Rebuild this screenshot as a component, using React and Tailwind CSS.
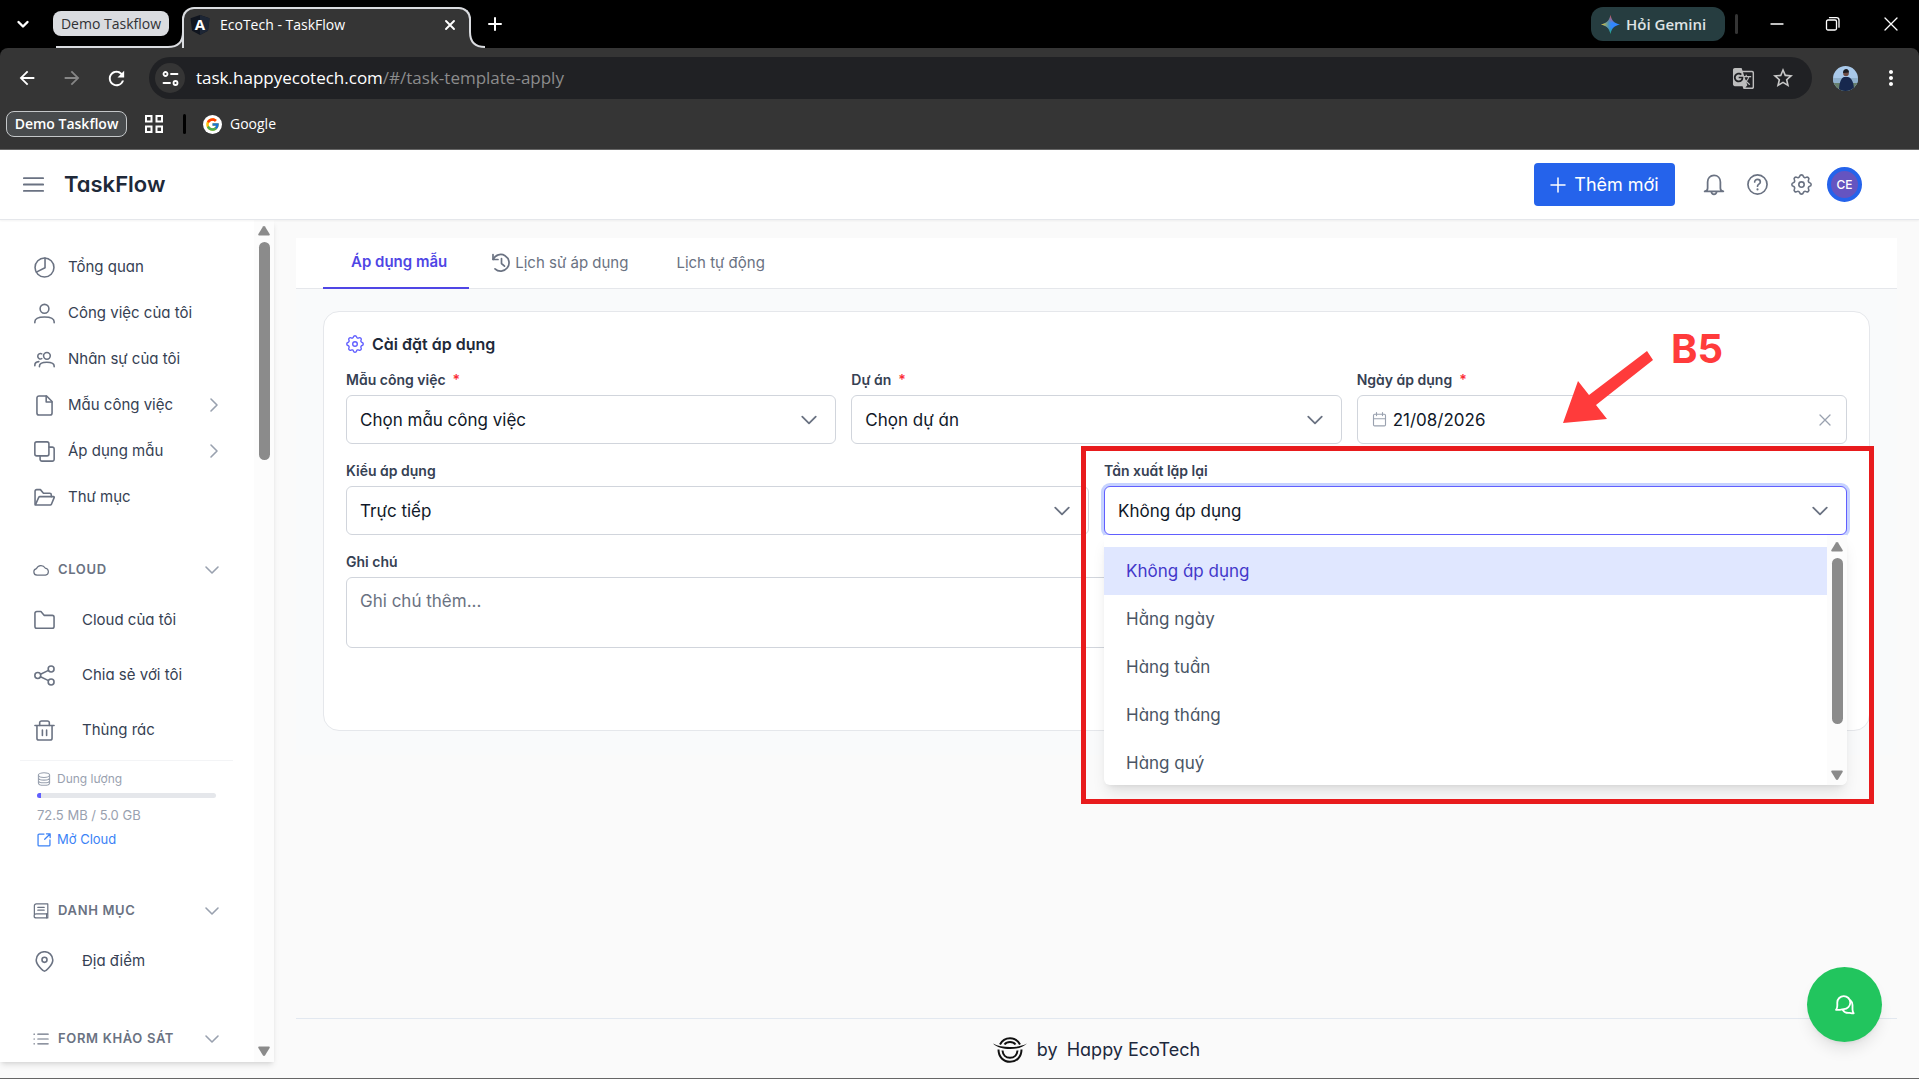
import { useState } from "react";
import { FcGoogle } from "react-icons/fc";
import { MdArrowBack, MdArrowForward, MdGTranslate, MdMoreVert, MdRefresh, MdStarBorder } from "react-icons/md";

const Icon = ({ className, children, box = 20, stroke = 1.5 }) => (
    <svg
        className={`shrink-0 ${className}`}
        viewBox={`0 0 ${box} ${box}`}
        fill="none"
        stroke="currentColor"
        strokeWidth={stroke}
        strokeLinecap="round"
        strokeLinejoin="round"
        aria-hidden="true"
    >
        {children}
    </svg>
);

const ChevronDown = ({ className }) => (
    <Icon className={className} box={16} stroke={1.6}>
        <path d="M2 5l6 6 6-6" />
    </Icon>
);

const ChevronRight = ({ className }) => (
    <Icon className={className} box={16} stroke={1.6}>
        <path d="M5 2l6 6-6 6" />
    </Icon>
);

const Cog = ({ className }) => (
    <svg
        className={`shrink-0 ${className}`}
        viewBox="2.2 2.2 19.6 19.6"
        fill="none"
        stroke="currentColor"
        strokeWidth="1.5"
        strokeLinejoin="round"
        aria-hidden="true"
    >
        <path d="M10.325 4.317c.426-1.756 2.924-1.756 3.35 0a1.724 1.724 0 002.573 1.066c1.543-.94 3.31.826 2.37 2.37a1.724 1.724 0 001.065 2.572c1.756.426 1.756 2.924 0 3.35a1.724 1.724 0 00-1.066 2.573c.94 1.543-.826 3.31-2.37 2.37a1.724 1.724 0 00-2.572 1.065c-.426 1.756-2.924 1.756-3.35 0a1.724 1.724 0 00-2.573-1.066c-1.543.94-3.31-.826-2.37-2.37a1.724 1.724 0 00-1.065-2.572c-1.756-.426-1.756-2.924 0-3.35a1.724 1.724 0 001.066-2.573c-.94-1.543.826-3.31 2.37-2.37.996.608 2.296.07 2.572-1.065z" />
        <circle cx="12" cy="12" r="2.5" />
    </svg>
);

const icons = {
    pie: (
        <>
            <circle cx="10" cy="10" r="9" />
            <path d="M10.500 1v9.300L2.200 14.400" />
        </>
    ),
    user: (
        <>
            <circle cx="10" cy="5.500" r="4.200" />
            <path d="M.8 18.800v-.9c0-3.200 3-4.600 9.200-4.600s9.200 1.400 9.200 4.600v.9" />
        </>
    ),
    users: (
        <>
            <circle cx="12.300" cy="6.500" r="3.200" />
            <path d="M5.200 16.800v-.6c0-2.600 2.600-3.600 7-3.600s7 1 7 3.600v.6" />
            <path d="M7.400 4.600a2.600 2.600 0 1 0 0 4.600M.8 16v-.7c0-1.800 1.200-3 3.800-3.300" />
        </>
    ),
    file: (
        <>
            <path d="M12 .9H4.800a2 2 0 0 0-2 2v14.200a2 2 0 0 0 2 2h10.400a2 2 0 0 0 2-2V6.200z" />
            <path d="M11.600 1v5.600h5.400" />
        </>
    ),
    clone: (
        <>
            <rect x=".8" y=".8" width="13.400" height="13.400" rx="1.800" />
            <path d="M14.400 5.800h3a1.800 1.800 0 0 1 1.800 1.800v9.800a1.800 1.800 0 0 1-1.800 1.800H7.600a1.800 1.800 0 0 1-1.800-1.800v-3" />
        </>
    ),
    folderOpen: (
        <>
            <path d="M1 16.500V4a1.500 1.500 0 0 1 1.500-1.500h3.600L9 6h6a1.500 1.500 0 0 1 1.500 1.500v1.800" />
            <path d="M1.200 17.200h14.400c.4 0 .7-.2.9-.6l2.700-6.500c.2-.5 0-.9-.6-.9H5.600c-.5 0-.9.3-1.100.7z" />
        </>
    ),
    cloud: <path d="M5 16.500a4.200 4.200 0 0 1-.6-8.300A6 6 0 0 1 15.200 7.600a4.500 4.500 0 0 1 .3 8.900z" />,
    folder: <path d="M.9 15.600V3.200a1.700 1.700 0 0 1 1.700-1.700h4l3 3.600h7.800a1.700 1.700 0 0 1 1.700 1.700v8.800a1.700 1.700 0 0 1-1.700 1.700H2.600a1.700 1.700 0 0 1-1.700-1.700z" />,
    share: (
        <>
            <circle cx="3.600" cy="10" r="2.800" />
            <circle cx="16.300" cy="3.800" r="2.800" />
            <circle cx="16.300" cy="16.200" r="2.800" />
            <path d="M6.200 8.800l7.600-3.700M6.200 11.200l7.600 3.700" />
        </>
    ),
    trash: (
        <>
            <path d="M.9 5.300h18.200M2.800 5.300v12a1.800 1.800 0 0 0 1.800 1.800h10.800a1.800 1.800 0 0 0 1.800-1.800v-12" />
            <path d="M5.400 5.200V2.700A1.800 1.800 0 0 1 7.200.9h5.600a1.800 1.800 0 0 1 1.800 1.800v2.500M8 9.600v5.200M12 9.600v5.200" />
        </>
    ),
    database: (
        <>
            <ellipse cx="10" cy="4.400" rx="8" ry="3.400" />
            <path d="M2 4.400v11.200c0 1.900 3.600 3.400 8 3.400s8-1.500 8-3.400V4.400M2 8.200c0 1.900 3.600 3.400 8 3.400s8-1.500 8-3.400M2 12c0 1.900 3.600 3.400 8 3.400s8-1.500 8-3.400" />
        </>
    ),
    external: (
        <>
            <path d="M10 1.500H3A1.500 1.500 0 0 0 1.500 3v14A1.500 1.500 0 0 0 3 18.500h14a1.500 1.500 0 0 0 1.500-1.500v-7" />
            <path d="M13.500 1.200h5.300v5.300M18.600 1.400l-7.600 7.600" />
        </>
    ),
    book: (
        <>
            <path d="M18.500 13.500H4a2.500 2.500 0 0 0 0 5.200h14.500V1.200H4A2.300 2.300 0 0 0 1.700 3.500v12.800" />
            <path d="M6 5.500h8M6 9h8M17 13.500v5" />
        </>
    ),
    pin: (
        <>
            <path d="M10 19.200c-1 0-7.900-5.600-7.900-10.600a7.900 7.900 0 0 1 15.800 0c0 5-6.900 10.600-7.900 10.600z" />
            <circle cx="10" cy="8.400" r="2.400" />
        </>
    ),
    list: <path d="M6 4h13M6 10h13M6 16h13M1.200 4h.6M1.200 10h.6M1.200 16h.6" />,
};

const navItems = [
    { icon: "pie", name: "Tổng quan" },
    { icon: "user", name: "Công việc của tôi" },
    { icon: "users", name: "Nhân sự của tôi" },
    { icon: "file", name: "Mẫu công việc", nested: true },
    { icon: "clone", name: "Áp dụng mẫu", nested: true },
    { icon: "folderOpen", name: "Thư mục" },
];

const cloudItems = [
    { icon: "folder", name: "Cloud của tôi" },
    { icon: "share", name: "Chia sẻ với tôi" },
    { icon: "trash", name: "Thùng rác" },
];

const frequencies = ["Không áp dụng", "Hằng ngày", "Hàng tuần", "Hàng tháng", "Hàng quý"];

// flare joining the active tab to the toolbar
const Corner = () => (
    <svg className="h-4 w-4" viewBox="0 0 16 16" aria-hidden="true">
        <path d="M0 16c9 0 15-5 15-14V0h1v16z" fill="#353535" />
        <path d="M0 15c9 0 15-4 15-15" fill="none" stroke="#dadce0" strokeWidth="2" />
    </svg>
);

const Browser = () => (
    <div className="shrink-0 bg-black font-['Open_Sans','Noto_Sans',sans-serif] text-white">
        <div className="flex h-12 items-end">
            <button aria-label="Tìm thẻ" className="mb-4 ml-[15px]">
                <Icon className="size-4" box={16} stroke={2.4}>
                    <path d="M3.500 6L8 10.500 12.500 6" />
                </Icon>
            </button>
            <div className="flex self-stretch pl-[22px]">
                <button className="mt-[11px] flex h-[25px] w-[116px] items-center justify-center rounded-lg bg-[#dadce0] text-sm text-[#303134]">
                    Demo Taskflow
                </button>
            </div>
            <div className="-ml-[113px] h-0.5 w-28 bg-[#dadce0]" />
            <Corner />
            <div className="-ml-0.5 flex h-[41px] w-[289px] items-center rounded-t-xl border-2 border-b-0 border-[#dadce0] bg-[#353535] pr-[11px] pb-2 pl-1.5">
                <svg className="h-5 w-5" viewBox="0 0 20 20" aria-hidden="true">
                    <path d="M10 0l9.500 3.300-1.500 12.400L10 20l-8-4.300L.5 3.300z" fill="#10151f" />
                    <path d="M10 0v20l8-4.300 1.500-12.400z" fill="#1d2635" />
                    <text x="10" y="15" textAnchor="middle" fontSize="15" fontWeight="700" fill="#fff">
                        A
                    </text>
                </svg>
                <span className="ml-2.5 grow text-sm">EcoTech - TaskFlow</span>
                <button aria-label="Đóng thẻ">
                    <Icon className="size-4" box={16} stroke={1.9}>
                        <path d="M4 4l8 8M12 4l-8 8" />
                    </Icon>
                </button>
            </div>
            <div className="-ml-0.5 -scale-x-100">
                <Corner />
            </div>
            <button aria-label="Thẻ mới" className="mb-4 ml-0.5">
                <Icon className="size-4" box={16} stroke={2}>
                    <path d="M8 2v12M2 8h12" />
                </Icon>
            </button>
            <div className="ml-auto flex items-center self-stretch">
                <button className="flex h-[34px] w-[134px] items-center gap-1.5 rounded-xl bg-[#263d40] pl-2.5 text-[15px] font-semibold text-[#dfe3e4]">
                    <svg className="size-[19px]" viewBox="0 0 20 20" aria-hidden="true">
                        <defs>
                            <linearGradient id="geminiH" x1="0" x2="1" y1=".5" y2=".5">
                                <stop offset=".05" stopColor="#f5c518" />
                                <stop offset=".4" stopColor="#5f9d88" stopOpacity=".6" />
                                <stop offset=".6" stopColor="#3186ff" stopOpacity="0" />
                            </linearGradient>
                            <linearGradient id="geminiV" x1=".5" x2=".5" y1="0" y2="1">
                                <stop offset=".05" stopColor="#f5483d" />
                                <stop offset=".42" stopColor="#3186ff" />
                                <stop offset=".65" stopColor="#3186ff" />
                                <stop offset="1" stopColor="#12b75a" />
                            </linearGradient>
                        </defs>
                        <path d="M10 0c1.200 6 4 8.800 10 10-6 1.200-8.800 4-10 10-1.200-6-4-8.800-10-10 6-1.200 8.800-4 10-10z" fill="url(#geminiV)" />
                        <path d="M10 0c1.200 6 4 8.800 10 10-6 1.200-8.800 4-10 10-1.200-6-4-8.800-10-10 6-1.200 8.800-4 10-10z" fill="url(#geminiH)" />
                    </svg>
                    Hỏi Gemini
                </button>
                <span className="ml-2.5 h-5 w-[3px] rounded-full bg-[#353535]" />
                <button aria-label="Thu nhỏ" className="ml-[31px]">
                    <Icon className="size-4" box={16} stroke={1.3}>
                        <path d="M2 8h12" />
                    </Icon>
                </button>
                <button aria-label="Khôi phục" className="ml-10">
                    <Icon className="size-4" box={16} stroke={1.3}>
                        <rect x="1.500" y="4" width="10" height="10" rx="1.500" />
                        <path d="M4.500 1.700h7a2.500 2.500 0 0 1 2.500 2.500v7" />
                    </Icon>
                </button>
                <button aria-label="Đóng" className="mr-5 ml-[42px]">
                    <Icon className="size-4" box={16} stroke={1.3}>
                        <path d="M2 2l12 12M14 2L2 14" />
                    </Icon>
                </button>
            </div>
        </div>
        <div className="rounded-t-lg border-b border-[#666] bg-[#353535]">
            <div className="flex h-[60px] items-center pl-4">
                <button aria-label="Quay lại">
                    <MdArrowBack className="size-[22px]" />
                </button>
                <button aria-label="Tiến" className="ml-[23px] text-[#868686]">
                    <MdArrowForward className="size-[22px]" />
                </button>
                <button aria-label="Tải lại" className="ml-[22px]">
                    <MdRefresh className="size-[23px]" />
                </button>
                <div className="ml-[21px] flex h-[42px] grow items-center rounded-full bg-[#202124] pr-[17px] pl-1.5">
                    <button aria-label="Thông tin trang" className="flex size-[30px] items-center justify-center rounded-full bg-[#353535]">
                        <Icon className="size-[17px]" box={17} stroke={1.8}>
                            <circle cx="3.500" cy="4" r="2" />
                            <path d="M9 4h6.500M1.500 13H8" />
                            <circle cx="13.500" cy="13" r="2" />
                        </Icon>
                    </button>
                    <p className="ml-[11px] grow text-[17px]">
                        task.happyecotech.com<span className="text-[#8c8c8c]">/#/task-template-apply</span>
                    </p>
                    <button aria-label="Dịch trang" className="text-[#bdbdbd]">
                        <MdGTranslate className="size-[23px]" />
                    </button>
                    <button aria-label="Đánh dấu trang" className="ml-4 text-[#c8c8c8]">
                        <MdStarBorder className="size-6" />
                    </button>
                </div>
                <button aria-label="Hồ sơ" className="ml-[21px]">
                    <svg className="size-[25px] rounded-full" viewBox="0 0 25 25" aria-hidden="true">
                        <rect width="25" height="25" fill="#a9c9ea" />
                        <rect y="12" width="25" height="5" fill="#8fb0cc" />
                        <path d="M0 17h25v8H0z" fill="#667f6c" />
                        <path d="M6 25c0-8 2-13 5-14h4c4 1 6 6 6 14z" fill="#17284e" />
                        <circle cx="13" cy="7.500" r="2.800" fill="#6d4c45" />
                        <path d="M10 7c0-3 1.500-4 3.200-4S16 4.500 16 6.500z" fill="#1b1c22" />
                    </svg>
                </button>
                <button aria-label="Trình đơn" className="mr-4 ml-[21px]">
                    <MdMoreVert className="size-6" />
                </button>
            </div>
            <div className="flex h-[41px] items-start pt-[3px] pl-1.5 text-sm">
                <button className="flex h-[26px] w-[121px] items-center justify-center rounded-lg border border-[#c4c7c9] bg-[#484b4d] font-semibold">
                    Demo Taskflow
                </button>
                <button aria-label="Nhóm thẻ" className="mt-1 ml-[18px]">
                    <Icon className="size-[18px]" box={18} stroke={2}>
                        <rect x="1" y="1" width="5.500" height="5.500" strokeLinejoin="miter" />
                        <rect x="11.500" y="1" width="5.500" height="5.500" strokeLinejoin="miter" />
                        <rect x="1" y="11.500" width="5.500" height="5.500" strokeLinejoin="miter" />
                        <rect x="11.500" y="11.500" width="5.500" height="5.500" strokeLinejoin="miter" />
                    </Icon>
                </button>
                <span className="mt-[3px] ml-5 h-5 w-[3px] rounded-full bg-black" />
                <a href="#google" className="ml-[17px] flex h-[26px] items-center gap-2">
                    <span className="rounded-full bg-white p-0.5">
                        <FcGoogle className="size-[15px]" />
                    </span>
                    Google
                </a>
            </div>
        </div>
    </div>
);

const Header = () => (
    <header className="z-10 flex h-[70px] shrink-0 items-center border-b border-gray-200 bg-white pr-[57px] pl-[23px] text-gray-500 shadow-xs">
        <button aria-label="Thu gọn menu">
            <Icon className="size-[21px]" stroke={1.7}>
                <path d="M.8 4h18.400M.8 10h18.400M.8 16h18.400" />
            </Icon>
        </button>
        <h1 className="ml-5 grow text-[22px] font-semibold text-gray-800">TaskFlow</h1>
        <button className="flex h-[43px] w-[141px] items-center justify-center gap-2 rounded-sm bg-[#2563eb] text-lg text-white">
            <Icon className="size-4" box={16}>
                <path d="M8 1v14M1 8h14" />
            </Icon>
            Thêm mới
        </button>
        <button aria-label="Thông báo" className="ml-7">
            <Icon className="size-[22px]" stroke={1.6}>
                <path d="M1.500 15.800c1.600-.2 2.700-1.200 2.700-2.800V7.300C4.200 3.800 6.500 1.200 10 1.200s5.800 2.600 5.800 6.100V13c0 1.600 1.100 2.600 2.700 2.800zM7.500 16c.3 1.600 1.200 2.500 2.500 2.500s2.200-.9 2.500-2.500" />
            </Icon>
        </button>
        <button aria-label="Trợ giúp" className="ml-[22px]">
            <Icon className="size-[21px]" stroke={1.6}>
                <circle cx="10" cy="10" r="9.100" />
                <path d="M7.300 7.600c0-1.500 1.200-2.500 2.700-2.500s2.700 1 2.700 2.500c0 2.100-2.700 2-2.700 4" />
                <path d="M10 14.600v.2" strokeWidth="2" />
            </Icon>
        </button>
        <button aria-label="Cài đặt" className="ml-[23px]">
            <Cog className="size-[21px]" />
        </button>
        <button className="ml-[15px] flex size-[35px] items-center justify-center rounded-full border-4 border-[#2563eb] bg-[#6554c0] text-xs font-medium text-white">
            CE
        </button>
    </header>
);

const ScrollBar = ({ className, thumb }) => (
    <div className={`flex w-5 shrink-0 flex-col items-center bg-[#fcfcfc] text-[#8b8b8b] ${className}`}>
        <svg className="h-2.5 w-3" viewBox="0 0 12 10" fill="currentColor" aria-hidden="true">
            <path d="M6 0c.5 0 .8.2 1 .5l4.600 7.500c.5.900.1 1.500-.8 1.500H1.200C.3 9.500-.1 8.900.4 8L5 .5c.2-.3.5-.5 1-.5z" />
        </svg>
        <span className={`mt-1.5 w-[11px] rounded-full bg-[#8b8b8b] ${thumb}`} />
        <svg className="mt-auto h-2.5 w-3 rotate-180" viewBox="0 0 12 10" fill="currentColor" aria-hidden="true">
            <path d="M6 0c.5 0 .8.2 1 .5l4.600 7.500c.5.900.1 1.500-.8 1.500H1.200C.3 9.500-.1 8.900.4 8L5 .5c.2-.3.5-.5 1-.5z" />
        </svg>
    </div>
);

const Section = ({ icon, title, children }) => (
    <section className="mt-7">
        <button className="flex h-11 w-full items-center pr-[34px] pl-[33px] text-[13px] font-semibold tracking-wider text-gray-500 uppercase">
            <Icon className="size-4">{icons[icon]}</Icon>
            <span className="ml-[9px] grow text-left">{title}</span>
            <ChevronDown className="size-4 text-gray-400" />
        </button>
        <div className="pt-px">{children}</div>
    </section>
);

const SubItem = ({ item }) => (
    <a href="#cloud" className="flex h-[55px] items-center gap-[27px] pl-[34px] text-[15px]">
        <Icon className="size-[21px] text-gray-500">{icons[item.icon]}</Icon>
        {item.name}
    </a>
);

const Sidebar = () => {
    const renderedItems = navItems.map((item) => (
        <a href="#menu" key={item.name} className="flex h-[46px] items-center pr-8 pl-[34px] text-[15px]">
            <Icon className="size-[21px] text-gray-500">{icons[item.icon]}</Icon>
            <span className="ml-[13px] grow">{item.name}</span>
            {item.nested && <ChevronRight className="size-4 text-gray-400" />}
        </a>
    ));

    return (
        <aside className="mb-4 flex w-[274px] shrink-0 overflow-hidden bg-white text-gray-700 shadow-md">
            <nav className="min-w-0 grow pt-6">
                {renderedItems}
                <Section icon="cloud" title="Cloud">
                    {cloudItems.map((item) => (
                        <SubItem key={item.name} item={item} />
                    ))}
                    <div className="mt-0.5 mr-[21px] ml-5 border-t border-gray-100 px-[17px] pt-2 pb-[11px] text-[13px] text-gray-400">
                        <div className="flex h-5 items-center gap-1.5 text-xs">
                            <Icon className="size-3.5">{icons.database}</Icon>
                            Dung lượng
                        </div>
                        <div className="mt-1 h-[5px] overflow-hidden rounded-full bg-gray-200">
                            <div className="h-full bg-indigo-500" style={{ width: "2%" }} />
                        </div>
                        <p className="mt-[7px] h-5 leading-5">72.5 MB / 5.0 GB</p>
                        <a href="#open" className="mt-[5px] flex h-5 items-center gap-1.5 text-[#3b82f6]">
                            <Icon className="size-3.5" stroke={1.8}>
                                {icons.external}
                            </Icon>
                            Mở Cloud
                        </a>
                    </div>
                </Section>
                <Section icon="book" title="Danh mục">
                    <SubItem item={{ icon: "pin", name: "Địa điểm" }} />
                </Section>
                <Section icon="list" title="Form khảo sát" />
            </nav>
            <ScrollBar className="pt-1.5 pb-1.5" thumb="h-[218px]" />
        </aside>
    );
};

const Field = ({ id, label, required, className = "", children }) => (
    <div className={`relative ${className}`}>
        <label htmlFor={id} className="mb-[5px] block h-5 text-sm leading-5 font-semibold text-gray-700">
            {label}
            {required && <span className="ml-[7px] text-red-500">*</span>}
        </label>
        {children}
    </div>
);

const Select = ({ id, options, value, onChange, focused }) => (
    <div className="relative">
        <select
            id={id}
            value={value}
            onChange={(event) => onChange(event.target.value)}
            className={`h-[49px] w-full appearance-none rounded-md border bg-white px-[13px] pt-0.5 text-[17px] text-gray-900 outline-none ${
                focused ? "border-indigo-500 ring-3 ring-indigo-200" : "border-gray-300"
            }`}
        >
            {options.map((option) => (
                <option key={option}>{option}</option>
            ))}
        </select>
        <ChevronDown className="pointer-events-none absolute top-4 right-[18px] size-[18px] text-gray-500" />
    </div>
);

const Form = () => {
    const [template, setTemplate] = useState("Chọn mẫu công việc");
    const [project, setProject] = useState("Chọn dự án");
    const [type, setType] = useState("Trực tiếp");
    const [date, setDate] = useState("21/08/2026");
    const [frequency, setFrequency] = useState("Không áp dụng");

    return (
        <div className="rounded-2xl border border-gray-200 bg-white px-[22px] pt-5 pb-[82px]">
            <h2 className="mb-3.5 flex h-6 items-center gap-2 text-base font-semibold text-gray-800">
                <Cog className="size-[18px] text-indigo-500" />
                Cài đặt áp dụng
            </h2>
            <div className="grid grid-cols-6 gap-x-[15px] gap-y-[17px]">
                <Field id="template" label="Mẫu công việc" required className="col-span-2">
                    <Select id="template" options={["Chọn mẫu công việc"]} value={template} onChange={setTemplate} />
                </Field>
                <Field id="project" label="Dự án" required className="col-span-2">
                    <Select id="project" options={["Chọn dự án"]} value={project} onChange={setProject} />
                </Field>
                <Field id="date" label="Ngày áp dụng" required className="col-span-2">
                    <div className="flex h-[49px] items-center rounded-md border border-gray-300 bg-white px-3.5">
                        <Icon className="size-[15px] text-gray-400">
                            <rect x="2" y="3" width="16" height="15.500" rx="1.500" />
                            <path d="M2 9h16M6 .8v4M14 .8v4" />
                        </Icon>
                        <input
                            id="date"
                            value={date}
                            onChange={(event) => setDate(event.target.value)}
                            className="ml-1.5 min-w-0 grow pt-0.5 text-[17px] text-gray-900 outline-none"
                        />
                        <button aria-label="Xóa ngày" onClick={() => setDate("")} className="text-gray-400">
                            <Icon className="size-3.5" box={14} stroke={1.3}>
                                <path d="M2 2l10 10M12 2L2 12" />
                            </Icon>
                        </button>
                    </div>
                    <div className="absolute -top-[39px] right-[124px] flex text-[#ff3b3b]">
                        <svg className="mt-5 h-[73px] w-[91px]" viewBox="0 0 91 73" fill="currentColor" aria-hidden="true">
                            <path d="M0 72L15 30l11 14L84 0l6 9-57 45 11 14z" />
                        </svg>
                        <span className="ml-[17px] text-[40px] leading-[36px] font-bold">B5</span>
                    </div>
                </Field>
                <Field id="type" label="Kiểu áp dụng" className="col-span-3">
                    <Select id="type" options={["Trực tiếp"]} value={type} onChange={setType} />
                </Field>
                <Field id="frequency" label="Tần xuất lặp lại" className="col-span-3">
                    <Select id="frequency" options={frequencies} value={frequency} onChange={setFrequency} focused />
                    <div className="absolute inset-x-0 top-full z-10 flex h-[250px] overflow-hidden rounded-b-md bg-white shadow-lg">
                        <ul className="grow pt-3 text-[17px] text-gray-600">
                            {frequencies.map((option) => (
                                <li key={option}>
                                    <button
                                        onClick={() => setFrequency(option)}
                                        className={`flex h-12 w-full items-center pt-0.5 pl-[22px] ${
                                            option === frequency ? "bg-indigo-100 text-[#4338ca]" : ""
                                        }`}
                                    >
                                        {option}
                                    </button>
                                </li>
                            ))}
                        </ul>
                        <ScrollBar className="pt-[7px] pb-[5px]" thumb="h-[166px]" />
                    </div>
                    <div className="pointer-events-none absolute -top-[15px] -right-[27px] -left-[23px] z-20 h-[358px] border-5 border-[#e81b1d]" />
                </Field>
                <Field id="note" label="Ghi chú" className="col-span-6">
                    <textarea
                        id="note"
                        placeholder="Ghi chú thêm..."
                        className="block h-[71px] w-full resize-none rounded-md border border-gray-300 px-[13px] py-[11px] text-[17px] placeholder:text-gray-500"
                    />
                </Field>
            </div>
        </div>
    );
};

const Logo = () => (
    <svg className="h-[26px] w-[34px]" viewBox="0 0 34 26" fill="none" stroke="#111" strokeWidth="2" aria-hidden="true">
        <path d="M7 7.500C9 3.500 12.500 1.200 17 1.200s8 2.300 10 6.300" />
        <path d="M11.500 7.500C13 5.600 14.700 5 17 5s4 .6 5.500 2.500" />
        <path d="M0 6.500c5 2.600 10.500 3.500 17 3.500s12-.9 17-3.500c-4 4-10 5.500-17 5.500S4 10.500 0 6.500z" fill="#111" stroke="none" />
        <path d="M5.500 12.500C5.500 20 10.500 24.800 17 24.800S28.500 20 28.500 12.500" />
        <path d="M9.500 13.500c.3 4.300 3.300 7.200 7.500 7.200s7.200-2.900 7.500-7.200" />
    </svg>
);

export default function App() {
    return (
        <div className="flex h-screen flex-col overflow-hidden border-b border-[#666] bg-[#fafafa] font-[Inter,sans-serif] [font-feature-settings:'cv11']">
            <Browser />
            <Header />
            <div className="flex min-h-0 grow">
                <Sidebar />
                <main className="flex min-w-0 grow flex-col px-[22px] pt-[18px]">
                    <div className="bg-[#f9fafb]">
                        <div className="flex h-[51px] border-b border-gray-200 bg-white px-[27px] text-[15px] text-gray-500 [font-feature-settings:normal]">
                            <button className="-mb-px border-b-2 border-[#4f46e5] pr-[22px] pl-7 font-semibold text-[#4f46e5]">
                                Áp dụng mẫu
                            </button>
                            <button className="flex items-center gap-1 px-[22px]">
                                <Icon className="size-5" stroke={1.7}>
                                    <path d="M2 1.500v5h5" />
                                    <path d="M2.200 6.300A8.300 8.300 0 1 1 4 15.800M10.500 5.500v5l3 2.600" />
                                </Icon>
                                Lịch sử áp dụng
                            </button>
                            <button className="pr-[22px] pl-[26px]">Lịch tự động</button>
                        </div>
                        <div className="px-[27px] pt-[22px] pb-6">
                            <Form />
                        </div>
                    </div>
                    <footer className="mt-auto flex h-[60px] items-center justify-center gap-2.5 border-t border-slate-200 pt-0.5 text-[18px] text-slate-800">
                        <Logo />
                        <span>
                            by <span className="ml-1">Happy EcoTech</span>
                        </span>
                    </footer>
                </main>
            </div>
            <button
                aria-label="Trò chuyện"
                className="fixed right-[37px] bottom-[37px] z-30 flex size-[75px] items-center justify-center rounded-full bg-[#22c55e] text-white shadow-lg"
            >
                <Icon className="size-5" stroke={1.8}>
                    <path d="M1 14.800c1-1 1.300-2.200 1.300-4V7.600a6.500 6.500 0 1 1 6.500 6.500c-1.200 0-2 .7-3.800.7z" />
                    <path d="M15.500 5.500c1.500 1.300 2 2.600 2 4.500v4.500c0 1.500.3 2.500 1.200 3.800-1.800.2-2.700-.3-4-.5-3.200.5-5.500-.6-6.900-2.800" />
                </Icon>
            </button>
        </div>
    );
}
